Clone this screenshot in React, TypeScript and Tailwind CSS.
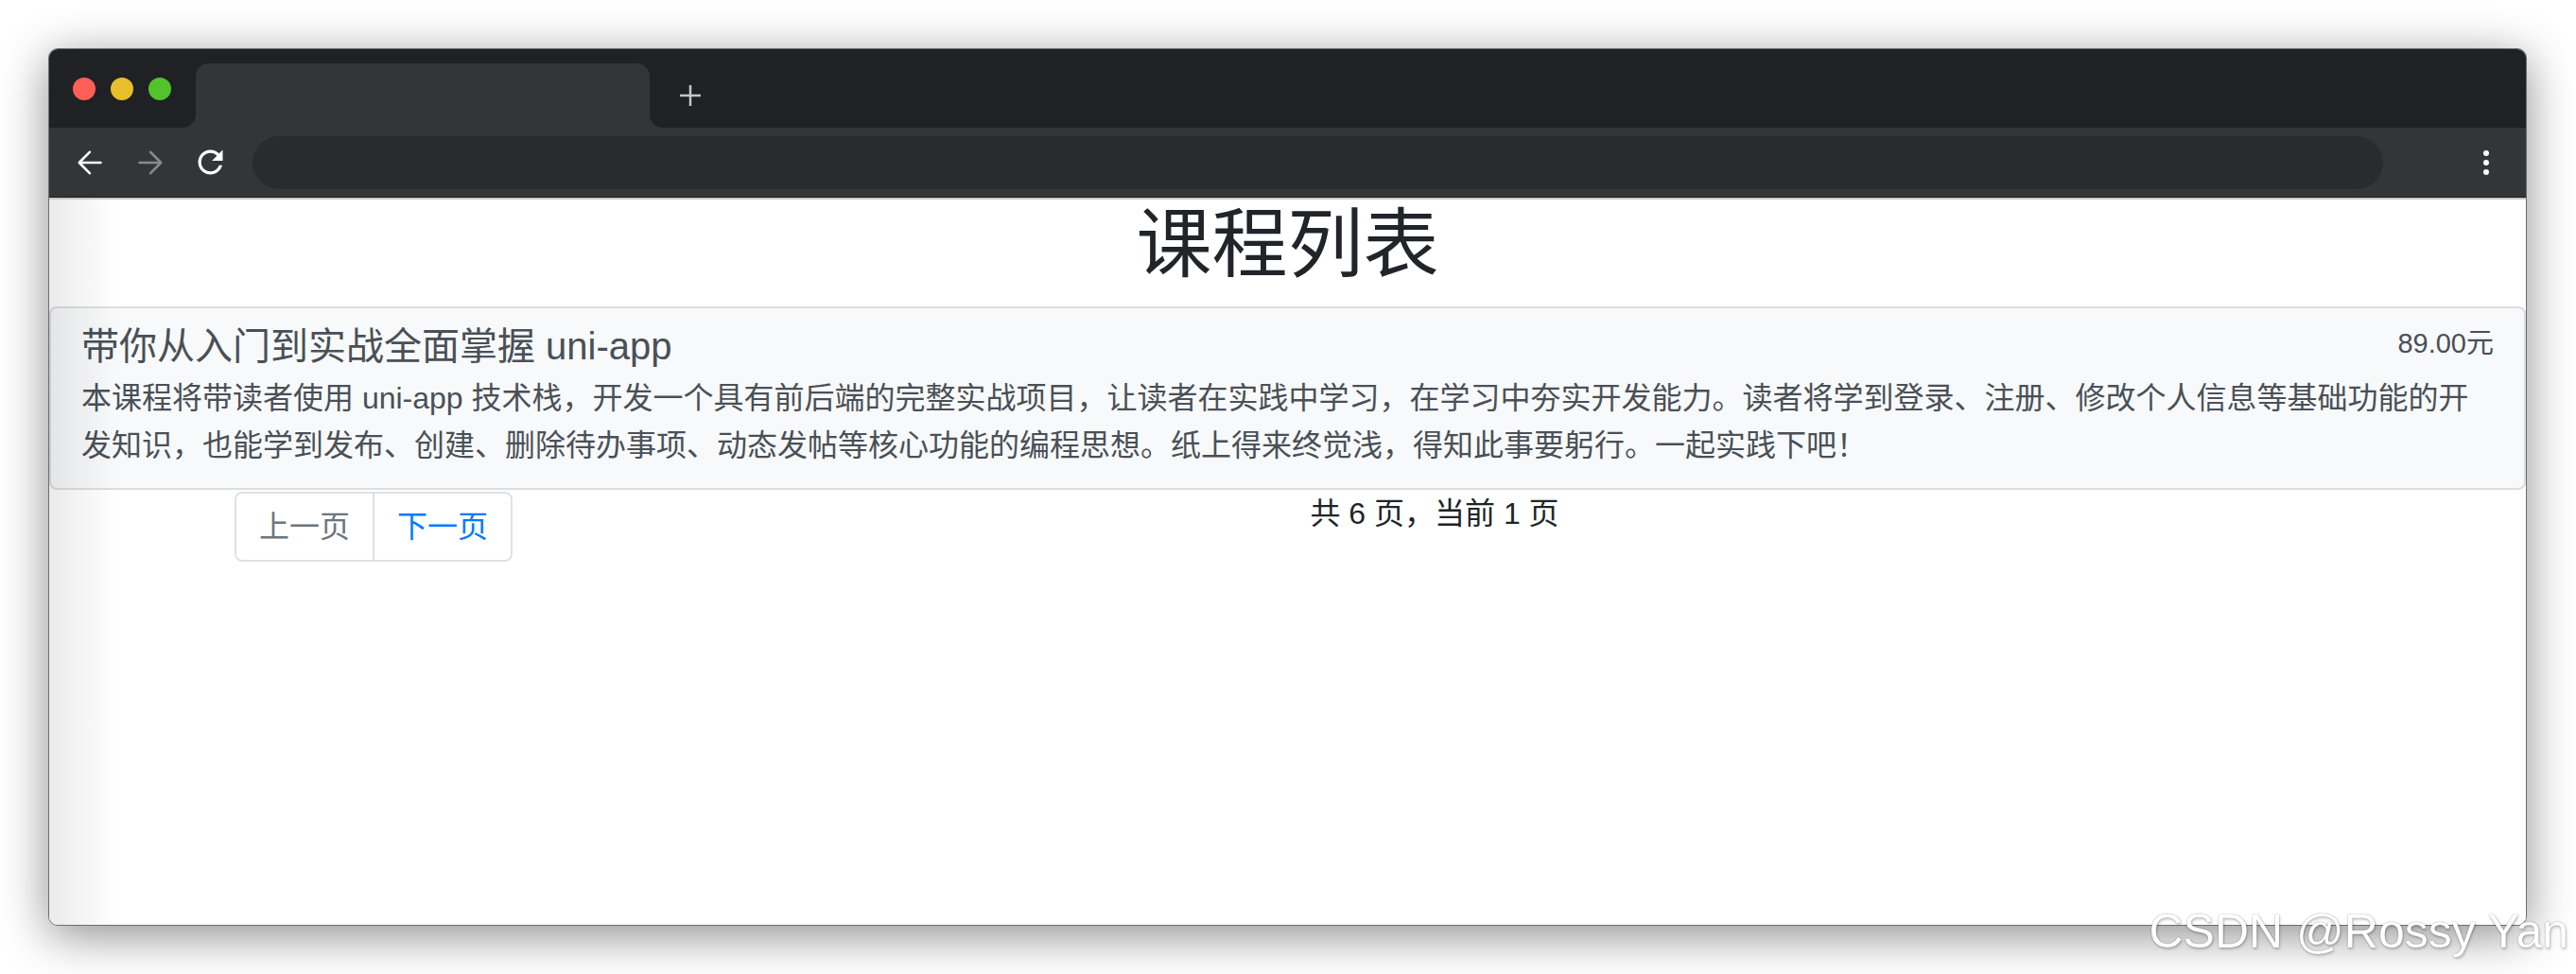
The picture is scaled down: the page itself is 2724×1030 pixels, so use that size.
import React from "react";

function BackIcon({ color }: { color: string }) {
  return (
    <svg width="26" height="26" viewBox="0 0 26 26" fill="none" stroke={color} strokeWidth="2.6" strokeLinecap="round" strokeLinejoin="round">
      <path d="M24.5 13H1.8M12.8 1.8L1.8 13l11 11.2" />
    </svg>
  );
}

function ForwardIcon({ color }: { color: string }) {
  return (
    <svg width="26" height="26" viewBox="0 0 26 26" fill="none" stroke={color} strokeWidth="2.6" strokeLinecap="round" strokeLinejoin="round">
      <path d="M1.5 13h22.7M13.2 1.8L24.2 13l-11 11.2" />
    </svg>
  );
}

function ReloadIcon() {
  return (
    <svg width="39" height="39" viewBox="0 0 24 24" fill="#ffffff">
      <path d="M17.65 6.35C16.2 4.9 14.21 4 12 4c-4.42 0-7.99 3.58-7.99 8s3.57 8 7.99 8c3.73 0 6.84-2.55 7.73-6h-2.08c-.82 2.33-3.04 4-5.65 4-3.31 0-6-2.69-6-6s2.69-6 6-6c1.66 0 3.14.69 4.22 1.78L13 11h7V4l-2.35 2.35z" />
    </svg>
  );
}

export default function App() {
  return (
    <div className="relative w-[2724px] h-[1030px] overflow-hidden bg-white font-['Liberation_Sans','Noto_Sans_CJK_SC',sans-serif]">
      <div className="pt-[51px] pl-[51px]">
        <div className="relative w-[2621px] h-[928px] rounded-[10px] border border-[#6e6e6e] overflow-hidden bg-white shadow-[0_10px_50px_rgba(0,0,0,0.45)] flex flex-col">
          {/* Tab strip */}
          <div className="h-[83px] bg-[#202124] flex items-end shrink-0">
            <div className="self-start mt-[30px] ml-[25px] flex gap-[16px]">
              <div className="w-[24px] h-[24px] rounded-full bg-[#ff5f57]" />
              <div className="w-[24px] h-[24px] rounded-full bg-[#e6bf2a]" />
              <div className="w-[24px] h-[24px] rounded-full bg-[#53c22b]" />
            </div>
            <div className="relative ml-[26px] w-[480px] h-[68px] rounded-t-[14px] bg-[#323639]">
              <div className="absolute bottom-0 left-[-14px] w-[14px] h-[14px] bg-[#323639]">
                <div className="w-full h-full bg-[#202124] rounded-br-[14px]" />
              </div>
              <div className="absolute bottom-0 right-[-14px] w-[14px] h-[14px] bg-[#323639]">
                <div className="w-full h-full bg-[#202124] rounded-bl-[14px]" />
              </div>
            </div>
            <div className="self-start mt-[37px] ml-[31px]">
              <svg width="24" height="24" viewBox="0 0 24 24" fill="none" stroke="#c6c6c6" strokeWidth="2.5">
                <path d="M12 1v22M1 12h22" />
              </svg>
            </div>
          </div>

          {/* Toolbar */}
          <div className="h-[74px] bg-[#323639] border-b border-[#1c1c1c] flex items-center shrink-0">
            <div className="ml-[30px] flex"><BackIcon color="#ffffff" /></div>
            <div className="ml-[38px] flex"><ForwardIcon color="#8a8a8a" /></div>
            <div className="ml-[31px] flex"><ReloadIcon /></div>
            <div className="ml-[25px] w-[2253px] h-[56px] rounded-full bg-[#292c2f]" />
            <div className="ml-[106px] flex">
              <svg width="6" height="26" viewBox="0 0 6 26" fill="#ffffff">
                <circle cx="3" cy="3" r="3" />
                <circle cx="3" cy="13" r="3" />
                <circle cx="3" cy="23" r="3" />
              </svg>
            </div>
          </div>

          {/* Page content */}
          <div className="relative flex-1 border-t-2 border-[#c8c8c8] bg-white">
            <h1 className="text-center text-[80px] leading-[96px] font-normal text-[#212529] mb-[17px]">课程列表</h1>

            <div className="border-2 border-[#dcdddf] rounded-[8px] bg-[#f8f9fa] pt-[16px] pb-[20px] px-[32px] text-[#495057]">
              <div className="flex justify-between items-start">
                <h5 className="text-[40px] leading-[48px] font-normal">带你从入门到实战全面掌握 uni-app</h5>
                <span className="text-[29px] leading-[43px]">89.00元</span>
              </div>
              <p className="mt-[7px] text-[32px] leading-[49.5px]">
                <span className="block whitespace-nowrap">本课程将带读者使用 uni-app 技术栈，开发一个具有前后端的完整实战项目，让读者在实践中学习，在学习中夯实开发能力。读者将学到登录、注册、修改个人信息等基础功能的开</span>
                <span className="block whitespace-nowrap">发知识，也能学到发布、创建、删除待办事项、动态发帖等核心功能的编程思想。纸上得来终觉浅，得知此事要躬行。一起实践下吧！</span>
              </p>
            </div>

            <div className="flex">
              <div className="w-[1265px] pl-[196px] pt-[2px]">
                <div className="inline-flex border-2 border-[#dee2e6] rounded-[8px] text-[32px] leading-[40px] bg-white">
                  <span className="px-[24px] py-[15px] text-[#6c757d]">上一页</span>
                  <span className="px-[24px] py-[15px] text-[#007bff] border-l-2 border-[#dee2e6]">下一页</span>
                </div>
              </div>
              <div className="w-[400px] pt-[1px] text-center text-[32px] leading-[48px] text-[#212529]">共 6 页，当前 1 页</div>
            </div>

            <div className="pointer-events-none absolute left-0 top-0 bottom-0 w-[72px] bg-linear-to-r from-black/[0.08] to-transparent" />
          </div>
        </div>
      </div>

      {/* Watermark */}
      <div className="absolute right-[8px] top-[960px] text-[50px] leading-[50px] text-white whitespace-nowrap [text-shadow:0_0_1.5px_rgba(0,0,0,0.45),1px_2px_3px_rgba(0,0,0,0.2)]">
        CSDN @Rossy Yan
      </div>
    </div>
  );
}
